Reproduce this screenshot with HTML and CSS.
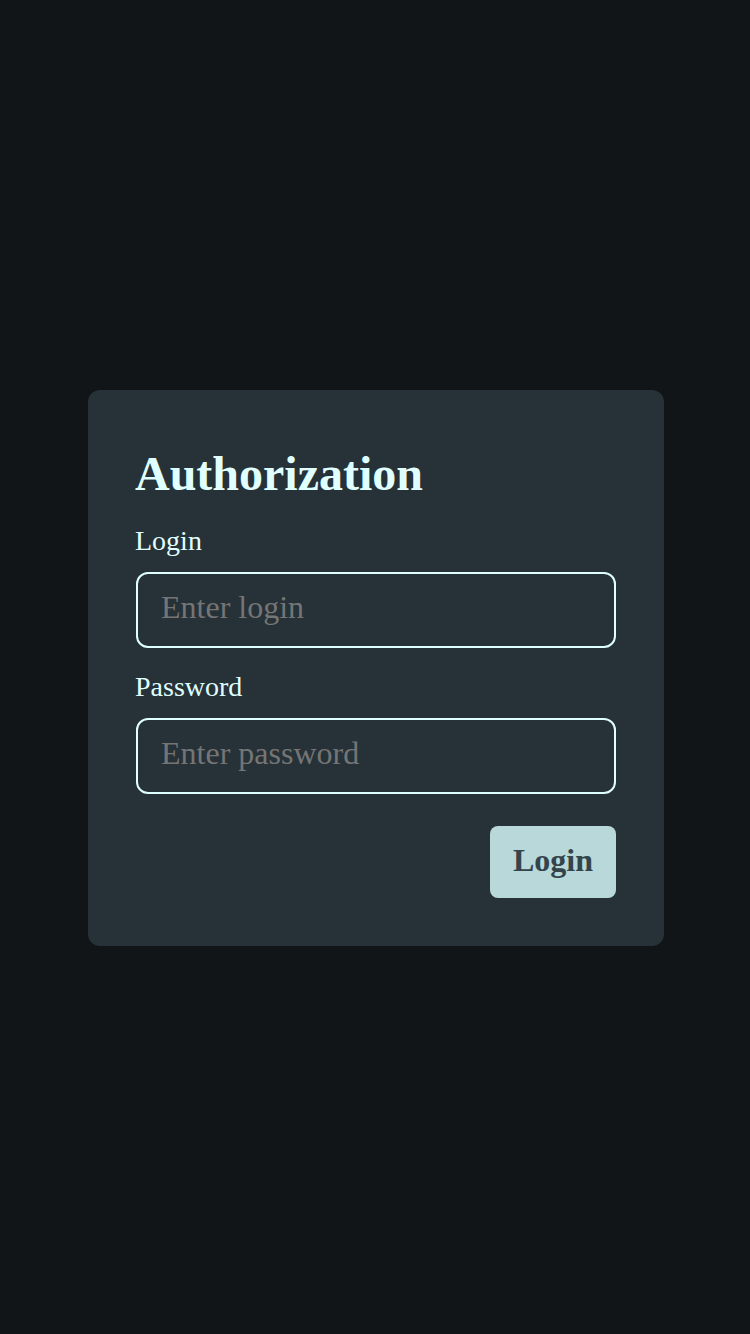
FILE: index.html
```html
<!DOCTYPE html>
<html lang="en">
<head>
<meta charset="utf-8">
<title>Authorization</title>
<link rel="stylesheet" href="styles.css">
</head>
<body>
<main class="page">
  <form class="card">
    <h1 class="title">Authorization</h1>
    <label class="label" for="login">Login</label>
    <input class="field" id="login" type="text" placeholder="Enter login">
    <label class="label" for="password">Password</label>
    <input class="field" id="password" type="password" placeholder="Enter password">
    <div class="actions">
      <button class="btn" type="button">Login</button>
    </div>
  </form>
</main>
</body>
</html>
```
FILE: styles.css
```css
* { box-sizing: border-box; }
html, body { margin: 0; padding: 0; }
body {
  background: #111518;
  font-family: "Liberation Serif", "Times New Roman", serif;
  color: #e0ffff;
}
.page {
  width: 750px;
  height: 1334px;
  display: flex;
  align-items: center;
  justify-content: center;
  padding-left: 2px;
  padding-top: 2px;
}
.card {
  width: 576px;
  background: #263238;
  border-radius: 12px;
  padding: 48px 48px 48px 47px;
  display: flex;
  flex-direction: column;
}
.title {
  margin: 0 0 14px;
  font-size: 48px;
  font-weight: bold;
  line-height: 72px;
  color: #e0ffff;
}
.label {
  font-size: 28px;
  line-height: 34px;
  margin-bottom: 14px;
  color: #e0ffff;
}
.field {
  width: calc(100% - 1px);
  margin-left: 1px;
  height: 76px;
  border: 2px solid #e0ffff;
  border-radius: 12px;
  background: #263238;
  padding: 0 24px 5px 23px;
  font-family: "Liberation Serif", "Times New Roman", serif;
  font-size: 32px;
  color: #e0ffff;
  outline: none;
  margin-bottom: 22px;
}
.field::placeholder { color: #757575; }
.actions {
  display: flex;
  justify-content: flex-end;
  margin-top: 10px;
}
.btn {
  width: 126px;
  height: 72px;
  border: none;
  border-radius: 8px;
  background: #b8d8d9;
  color: #34444b;
  font-family: "Liberation Serif", "Times New Roman", serif;
  font-size: 32px;
  font-weight: bold;
  padding: 0 0 4px;
}
```
